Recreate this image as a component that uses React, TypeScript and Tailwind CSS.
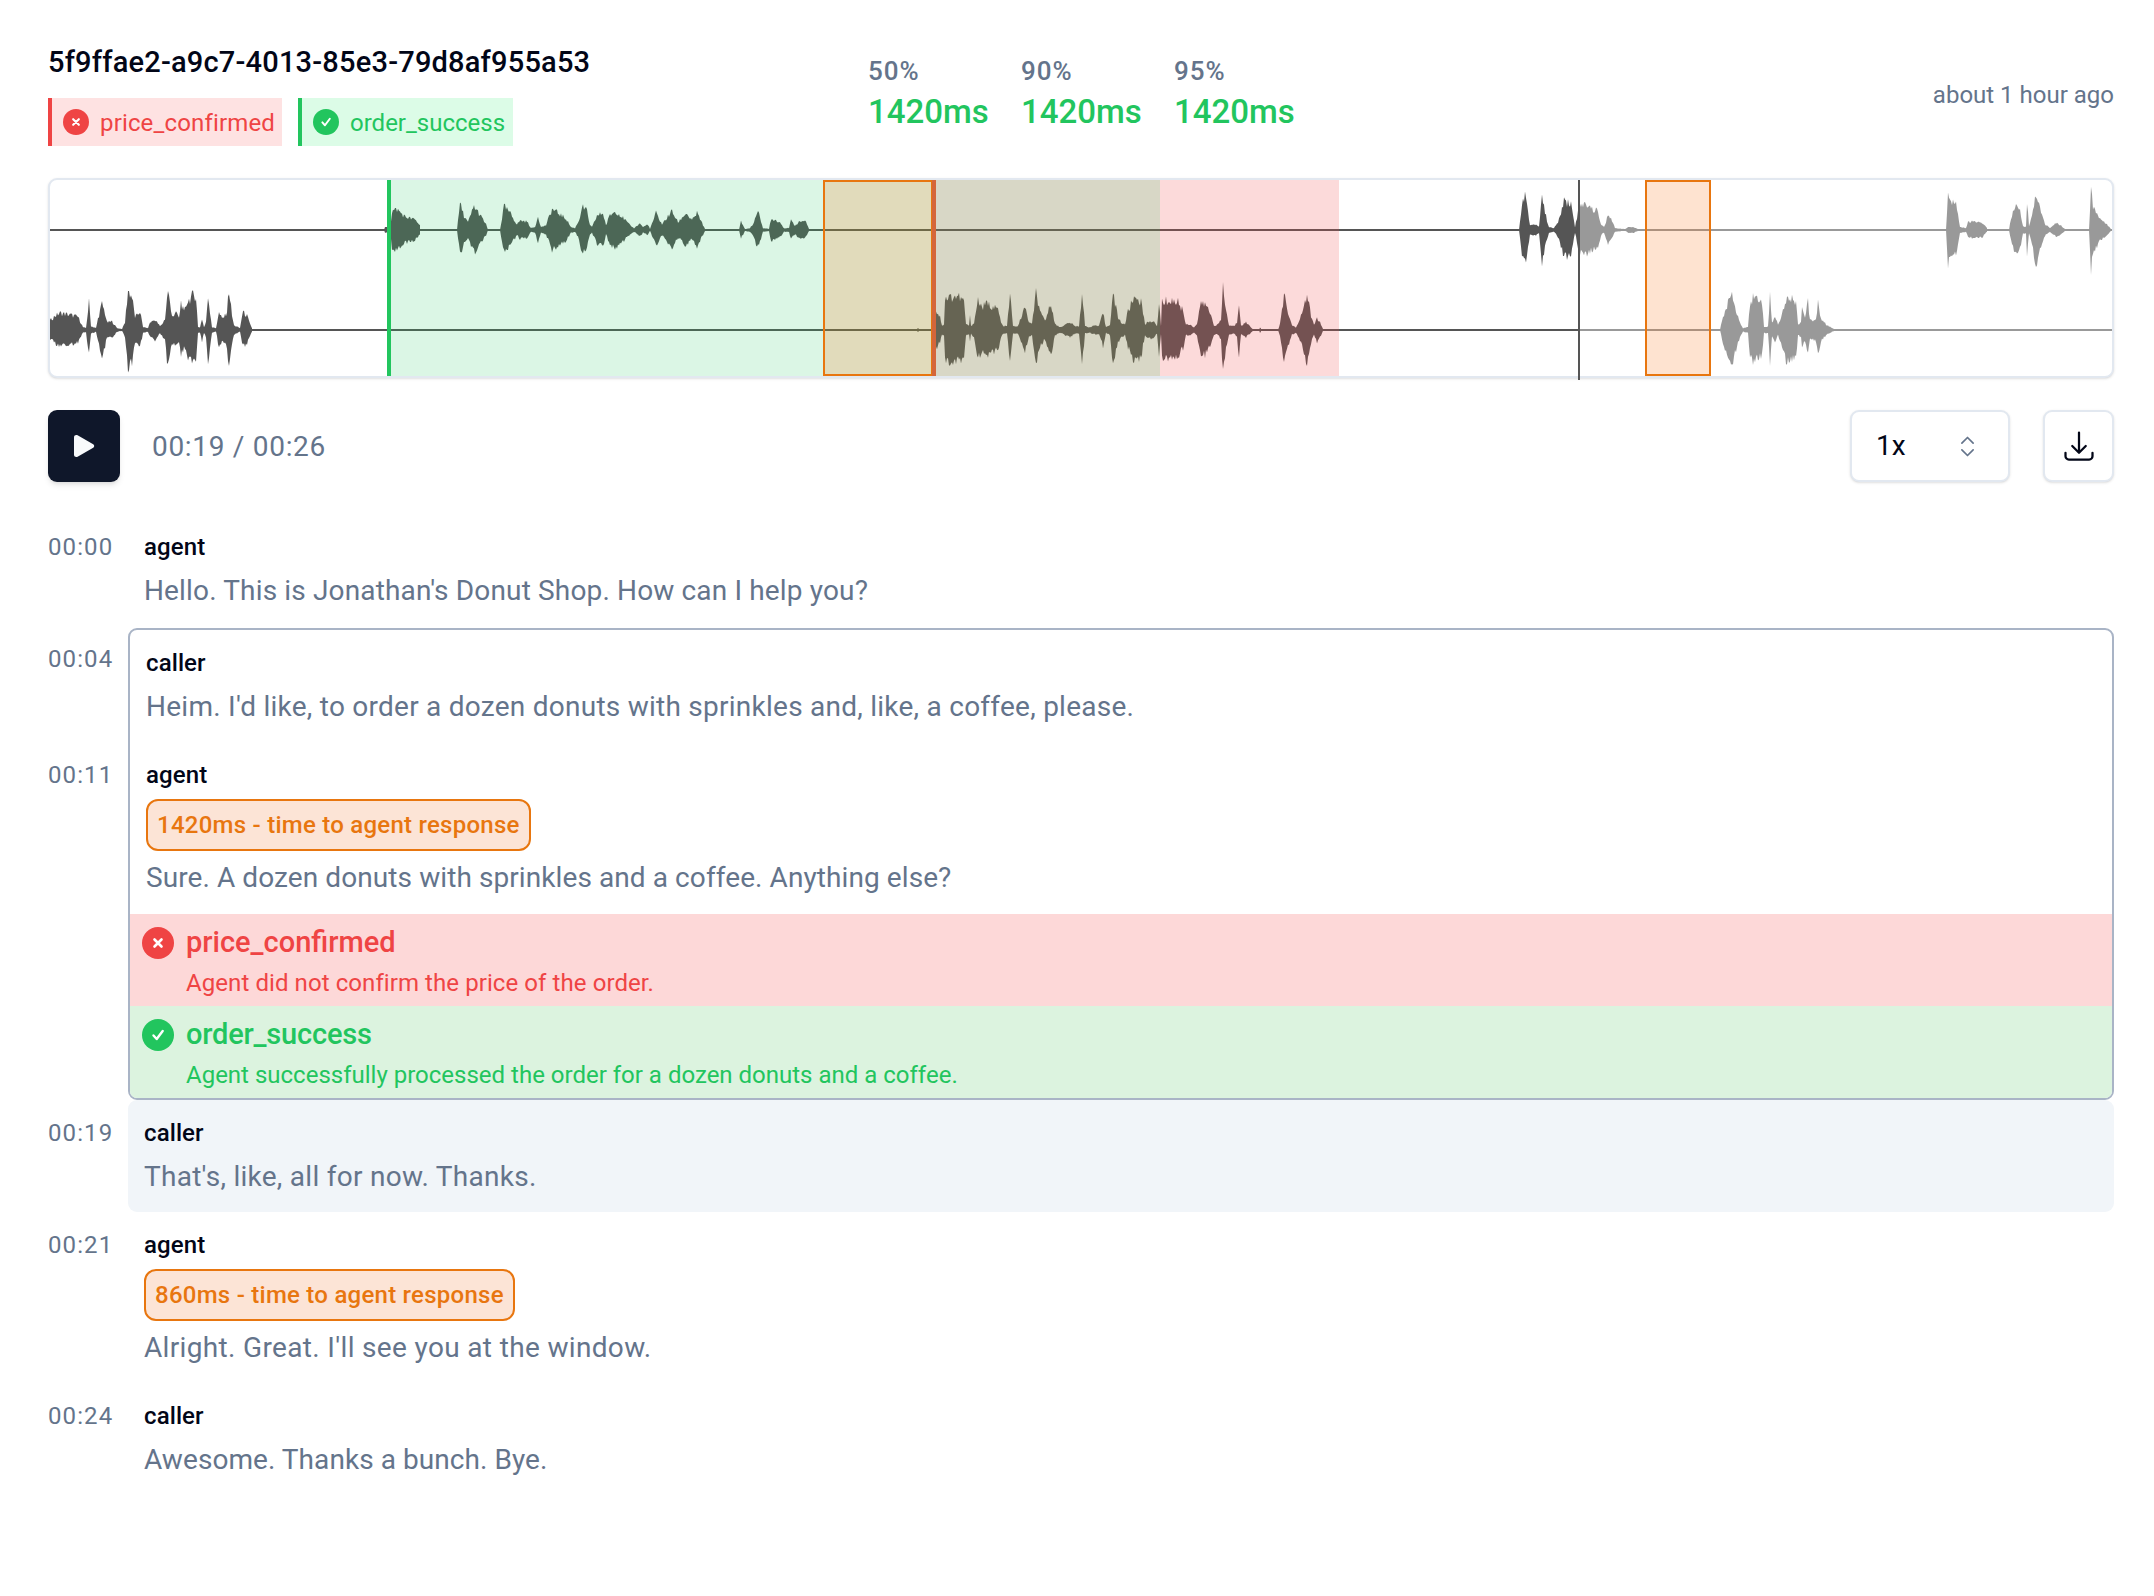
import React from "react";
import { ChevronsUpDown } from "lucide-react";

type P = [number, number];
const top: P[] = [
  [384,0],[385,3],[388,3],[390,0],[392,20],[397,22],[405,14],[415,11],[420,5],[421,0],
  [457,0],[460,28],[464,15],[468,8],[474,25],[480,16],[486,6],[488,0],
  [500,0],[504,25],[510,18],[517,6],[520,10],[527,9],[531,2],[535,3],[538,15],[541,3],[546,5],[552,22],[558,18],[566,12],[571,3],[575,2],[579,10],[582,25],[587,20],[590,5],[592,3],[597,15],[603,18],[606,5],[610,16],[616,20],[622,14],[630,5],[634,2],[640,7],[643,3],[648,6],[650,1],[656,18],[662,6],[672,20],[678,8],[686,18],[692,10],[697,18],[705,1],[706,0],
  [739,0],[741,9],[745,1],[750,2],[754,8],[757,20],[760,14],[763,2],[769,1],[771,12],[775,11],[780,8],[784,2],[789,2],[791,10],[795,5],[800,9],[805,10],[809,1],[810,0],
  [1519,0],[1522,30],[1525,38],[1528,20],[1530,5],[1535,6],[1539,4],[1542,38],[1545,18],[1549,3],[1554,2],[1558,8],[1564,30],[1571,28],[1575,3],[1579,24],[1587,28],[1592,22],[1598,20],[1601,6],[1604,3],[1608,15],[1612,10],[1615,2],[1625,1],[1628,3],[1634,3],[1638,1],[1639,0],
  [1946,0],[1948,37],[1953,30],[1956,28],[1960,3],[1966,2],[1968,8],[1975,9],[1982,8],[1987,2],[1988,0],
  [2009,0],[2011,12],[2015,25],[2020,20],[2023,4],[2026,4],[2027,30],[2029,4],[2032,15],[2036,40],[2040,22],[2045,6],[2050,2],[2057,8],[2065,1],[2066,0],
  [2089,0],[2090,20],[2091,45],[2093,25],[2096,20],[2100,12],[2105,8],[2111,1],[2112,0],
];
const bottom: P[] = [
  [50,10],[55,15],[60,18],[70,16],[78,14],[83,3],[86,2],[89,30],[91,4],[96,2],[98,12],[102,28],[105,18],[107,8],[112,9],[117,2],[122,1],
  [125,8],[128,42],[132,35],[135,14],[137,15],[140,20],[143,3],[148,2],[150,8],[155,11],[160,4],[162,6],[165,12],[168,43],[171,20],[173,15],[177,18],[179,12],[181,30],[184,18],[187,30],[190,33],[193,37],[196,36],[198,3],[200,3],[202,12],[204,3],[206,8],[208,37],[210,20],[212,3],[216,2],[218,14],[219,18],[222,12],[225,15],[227,20],[229,43],[232,15],[234,5],[240,2],[242,15],[243,19],[247,15],[250,6],[252,2],[253,0],
  [916,0],[918,2],[920,0],
  [934,0],[936,20],[940,14],[942,5],[944,6],[945,33],[950,35],[958,36],[964,30],[966,6],[969,5],[970,14],[971,4],[974,8],[978,32],[982,24],[987,28],[992,25],[998,22],[1001,8],[1003,4],[1007,4],[1010,38],[1013,4],[1018,4],[1022,16],[1025,24],[1029,8],[1032,6],[1036,40],[1040,18],[1045,10],[1049,22],[1051,30],[1055,6],[1060,3],[1066,6],[1070,8],[1075,4],[1079,4],[1082,40],[1085,4],[1090,3],[1095,5],[1099,4],[1103,18],[1106,3],[1110,6],[1113,38],[1118,14],[1121,8],[1125,6],[1128,20],[1135,36],[1141,30],[1145,6],[1150,10],[1154,8],[1157,4],[1159,30],[1161,4],
  [1162,30],[1168,31],[1178,30],[1183,20],[1186,6],[1190,6],[1194,3],[1197,6],[1200,26],[1205,28],[1211,16],[1214,5],[1217,5],[1221,10],[1223,48],[1226,20],[1229,5],[1234,4],[1237,8],[1239,30],[1241,5],[1246,8],[1249,5],[1253,1],[1259,0],[1260,3],[1262,0],[1278,0],[1280,6],[1284,38],[1288,18],[1292,5],[1296,3],[1299,8],[1302,18],[1307,38],[1311,15],[1314,5],[1317,13],[1320,8],[1323,1],[1324,0],
  [1720,0],[1723,15],[1728,28],[1732,38],[1737,18],[1741,5],[1743,2],[1748,3],[1750,30],[1754,35],[1762,28],[1764,3],[1768,4],[1770,36],[1772,8],[1775,14],[1778,6],[1781,14],[1786,33],[1790,35],[1796,30],[1798,6],[1801,8],[1802,22],[1805,12],[1808,30],[1810,10],[1812,10],[1816,12],[1818,30],[1821,12],[1827,5],[1832,2],[1834,1],[1835,0],
];

function noise(i: number) {
  const s = Math.sin(i * 12.9898) * 43758.5453;
  return s - Math.floor(s);
}

function wavePath(points: P[], cy: number, seed: number) {
  let path = "";
  let run: { x: number; a: number; b: number }[] = [];
  const flush = () => {
    if (run.length > 1) {
      const up = run.map((r) => `${r.x} ${(cy - r.a).toFixed(1)}`);
      const dn = run.slice().reverse().map((r) => `${r.x} ${(cy + r.b).toFixed(1)}`);
      path += `M${up.join("L")}L${dn.join("L")}Z`;
    }
    run = [];
  };
  for (let k = 0; k < points.length - 1; k++) {
    const [x0, a0] = points[k];
    const [x1, a1] = points[k + 1];
    if (x1 - x0 > 12 && a0 < 3 && a1 < 3) {
      flush();
      continue;
    }
    for (let x = x0; x < x1; x += 1) {
      const t = (x - x0) / (x1 - x0);
      const e = a0 + (a1 - a0) * t;
      const i = x + seed;
      run.push({ x, a: e * (0.78 + 0.32 * noise(i)), b: e * (0.74 + 0.3 * noise(i + 999)) });
    }
  }
  flush();
  return path;
}

const topPath = wavePath(top, 230, 3);
const bottomPath = wavePath(bottom, 330, 71);

function Waveform() {
  return (
    <div className="relative h-[200px] rounded-[9px] border-2 border-[#e2e8f0] bg-white shadow-sm">
      <svg className="absolute left-0 top-0 overflow-visible" width="2062" height="196" viewBox="50 180 2062 196">
        <defs>
          <linearGradient id="played" gradientUnits="userSpaceOnUse" x1="50" x2="2112" y1="0" y2="0">
            <stop offset="0.7420" stopColor="#555555" />
            <stop offset="0.7420" stopColor="#999999" />
          </linearGradient>
        </defs>
        <rect x="50" y="229" width="2062" height="2" fill="url(#played)" />
        <rect x="50" y="329" width="2062" height="2" fill="url(#played)" />
        <path d={topPath} fill="url(#played)" />
        <path d={bottomPath} fill="url(#played)" />
      </svg>
      <div className="absolute left-[882px] top-0 h-[196px] w-[407px] bg-[#ef4444]/20" />
      <div className="absolute left-[341px] top-0 h-[196px] w-[769px] bg-[#22c55e]/16" />
      <div className="absolute left-[337px] top-0 h-[196px] w-[4px] bg-[#22c55e]" />
      <div className="absolute left-[773px] top-0 h-[196px] w-[110px] border-2 border-[#e8760f] bg-[#f97316]/20" />
      <div className="absolute left-[882px] top-0 h-[196px] w-[4px] bg-[#d4663b]" />
      <div className="absolute left-[1595px] top-0 h-[196px] w-[66px] border-2 border-[#e8760f] bg-[#f97316]/20" />
      <div className="absolute left-[1528px] top-0 h-[200px] w-[2px] bg-[#555555]" />
    </div>
  );
}

function CrossIcon({ size }: { size: number }) {
  return (
    <svg width={size} height={size} viewBox="0 0 32 32" className="shrink-0">
      <circle cx="16" cy="16" r="16" fill="#ef4444" />
      <path d="M12.5 12.5l7 7M19.5 12.5l-7 7" stroke="#fff" strokeWidth="2.6" strokeLinecap="round" />
    </svg>
  );
}

function CheckIcon({ size }: { size: number }) {
  return (
    <svg width={size} height={size} viewBox="0 0 32 32" className="shrink-0">
      <circle cx="16" cy="16" r="16" fill="#22c55e" />
      <path d="M11.5 16.500l3.2 3.500 6-8" fill="none" stroke="#fff" strokeWidth="2.4" strokeLinecap="round" strokeLinejoin="round" />
    </svg>
  );
}

function Speaker({ name }: { name: string }) {
  return <div className="h-[36px] text-[24px] font-medium leading-[36px] tracking-[0.1px] text-[#020617]">{name}</div>;
}

function Body({ text, track }: { text: string; track: string }) {
  return <div className={`mt-[6px] text-[28px] leading-[40px] text-[#64748b] ${track}`}>{text}</div>;
}

function Latency({ text }: { text: string }) {
  return (
    <div className="mb-[7px] mt-[6px] flex">
      <div className="flex h-[52px] items-center rounded-[12px] border-2 border-[#e8760f] bg-[#fce4d6] px-[9px] text-[24px] font-medium tracking-[0.25px] text-[#e8760f]">
        {text}
      </div>
    </div>
  );
}

function Time({ t }: { t: string }) {
  return <div className="h-[36px] text-[24px] leading-[36px] tracking-[1.1px] text-[#64748b]">{t}</div>;
}

function Row({ t, active, children }: { t: string; active?: boolean; children: React.ReactNode }) {
  return (
    <div className="flex">
      <div className="w-[80px] shrink-0 pt-[15px]">
        <Time t={t} />
      </div>
      <div className={`min-w-0 flex-1 rounded-[9px] px-[16px] py-[15px] ${active ? "bg-[#f1f5f9]" : ""}`}>{children}</div>
    </div>
  );
}

function Stat({ label }: { label: string }) {
  return (
    <div className="w-[153px]">
      <div className="text-[26px] font-medium leading-[36px] tracking-[1px] text-[#64748b]">{label}</div>
      <div className="mt-[1px] text-[33px] font-medium leading-[44px] text-[#22c55e]">1420ms</div>
    </div>
  );
}

export default function App() {
  return (
    <div className="min-h-[1596px] bg-white pl-[48px] pr-[40px] pt-[42px] [font-family:Roboto,sans-serif]">
      <div className="flex h-[136px] items-start">
        <div className="w-[820px] shrink-0">
          <div className="text-[29px] font-medium leading-[40px] tracking-[0.2px] text-[#020617]">5f9ffae2-a9c7-4013-85e3-79d8af955a53</div>
          <div className="mt-[16px] flex gap-[16px]">
            <div className="flex h-[48px] w-[234px] items-center gap-[11px] border-l-[4px] border-[#ef4444] bg-[#fee2e2] pl-[11px] text-[24px] tracking-[0.15px] text-[#ef4444]">
              <CrossIcon size={26} />
              <span className="pt-[2px]">price_confirmed</span>
            </div>
            <div className="flex h-[48px] w-[215px] items-center gap-[11px] border-l-[4px] border-[#22c55e] bg-[#dcfce7] pl-[11px] text-[24px] text-[#22c55e]">
              <CheckIcon size={26} />
              <span className="pt-[2px]">order_success</span>
            </div>
          </div>
        </div>
        <div className="flex pt-[11px]">
          <Stat label="50%" />
          <Stat label="90%" />
          <Stat label="95%" />
        </div>
        <div className="ml-auto pt-[35px] text-[24px] leading-[36px] text-[#64748b]">about 1 hour ago</div>
      </div>

      <Waveform />

      <div className="mt-[32px] flex h-[72px] items-center">
        <div className="flex h-[72px] w-[72px] items-center justify-center rounded-[9px] bg-[#0f172a] shadow-md">
          <svg width="22" height="24" viewBox="0 0 22 24">
            <path d="M1 3.2C1 1.3 3 .4 4.6 1.3l15.6 9c1.3.8 1.3 2.6 0 3.4l-15.6 9C3 23.6 1 22.700 1 20.800z" fill="#f8fafc" />
          </svg>
        </div>
        <div className="ml-[32px] pt-[2px] text-[28px] tracking-[0.7px] text-[#64748b]">00:19 / 00:26</div>
        <div className="ml-auto flex h-[72px] w-[160px] items-center justify-between rounded-[9px] border-2 border-[#e2e8f0] bg-white pl-[24px] pr-[27px] text-[28px] text-[#020617] shadow-sm">
          1x
          <ChevronsUpDown size={27} strokeWidth={1.5} className="text-[#64748b]" />
        </div>
        <div className="ml-[33px] flex h-[72px] w-[71px] items-center justify-center rounded-[9px] border-2 border-[#e2e8f0] bg-white shadow-sm">
          <svg width="36" height="36" viewBox="0 0 24 24" fill="none" stroke="#020617" strokeWidth="1.5" strokeLinecap="round" strokeLinejoin="round">
            <path d="M3 16.500v2.250A2.250 2.250 0 0 0 5.250 21h13.500A2.250 2.250 0 0 0 21 18.750V16.500M16.500 12 12 16.500m0 0L7.500 12m4.500 4.500V3" />
          </svg>
        </div>
      </div>

      <div className="mt-[32px]">
        <Row t="00:00">
          <Speaker name="agent" />
          <Body text="Hello. This is Jonathan's Donut Shop. How can I help you?" track="tracking-[0.15px]" />
        </Row>

        <div className="mt-[2px] flex">
          <div className="w-[80px] shrink-0 pt-[13px]">
            <Time t="00:04" />
            <div className="mt-[80px]">
              <Time t="00:11" />
            </div>
          </div>
          <div className="min-w-0 flex-1 overflow-hidden rounded-[9px] border-2 border-[#a9b4c6]">
            <div className="px-[16px] py-[15px]">
              <Speaker name="caller" />
              <Body text="Heim. I'd like, to order a dozen donuts with sprinkles and, like, a coffee, please." track="tracking-[0.25px]" />
            </div>
            <div className="px-[16px] pb-[16px] pt-[15px]">
              <Speaker name="agent" />
              <Latency text="1420ms - time to agent response" />
              <Body text="Sure. A dozen donuts with sprinkles and a coffee. Anything else?" track="tracking-[0.085px]" />
            </div>
            <div className="h-[92px] bg-[#fdd8d8] pl-[12px] pt-[13px] text-[#ef4444]">
              <div className="flex h-[32px] items-center gap-[12px]">
                <CrossIcon size={32} />
                <span className="text-[29px] font-medium">price_confirmed</span>
              </div>
              <div className="mt-[6px] pl-[44px] text-[24px] leading-[36px] tracking-[0.08px]">Agent did not confirm the price of the order.</div>
            </div>
            <div className="h-[92px] bg-[#dcf3df] pl-[12px] pt-[13px] text-[#22c55e]">
              <div className="flex h-[32px] items-center gap-[12px]">
                <CheckIcon size={32} />
                <span className="text-[29px] font-medium tracking-[-0.2px]">order_success</span>
              </div>
              <div className="mt-[6px] pl-[44px] text-[24px] leading-[36px]">Agent successfully processed the order for a dozen donuts and a coffee.</div>
            </div>
          </div>
        </div>

        <Row t="00:19" active>
          <Speaker name="caller" />
          <Body text="That's, like, all for now. Thanks." track="tracking-[0.27px]" />
        </Row>
        <Row t="00:21">
          <Speaker name="agent" />
          <Latency text="860ms - time to agent response" />
          <Body text="Alright. Great. I'll see you at the window." track="tracking-[0.34px]" />
        </Row>
        <Row t="00:24">
          <Speaker name="caller" />
          <Body text="Awesome. Thanks a bunch. Bye." track="tracking-[0.06px]" />
        </Row>
      </div>
    </div>
  );
}
